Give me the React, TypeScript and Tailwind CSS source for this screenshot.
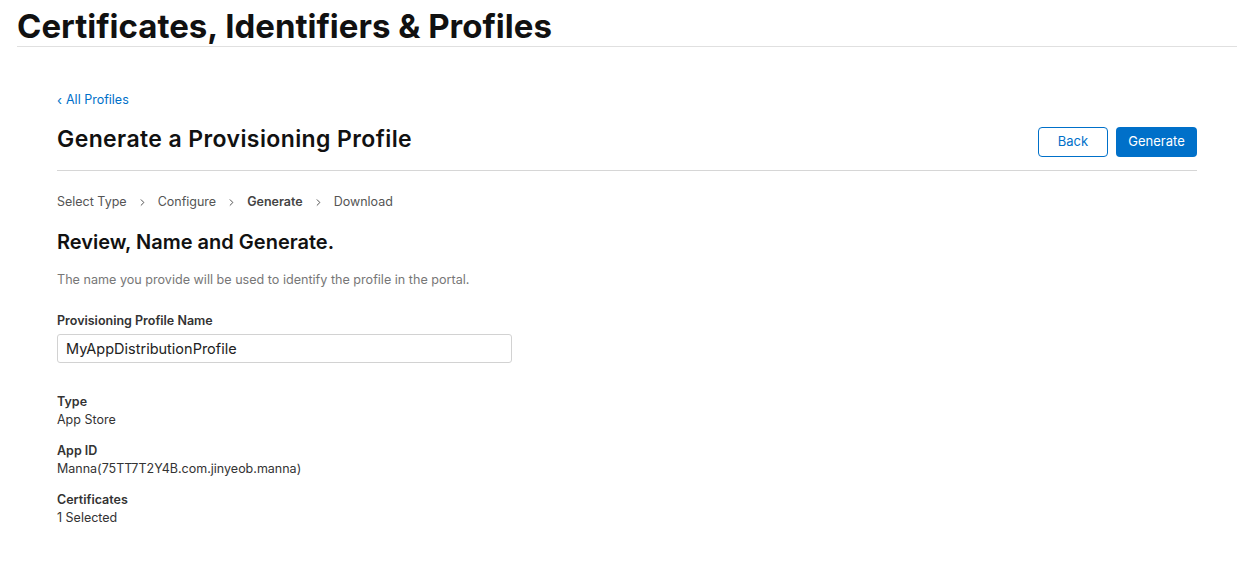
import { ChevronRight } from 'lucide-react';

const steps = ['Select Type', 'Configure', 'Generate', 'Download'];

const details = [
  { label: 'Type', value: 'App Store' },
  { label: 'App ID', value: 'Manna(75TT7T2Y4B.com.jinyeob.manna)' },
  { label: 'Certificates', value: '1 Selected' },
];

export default function App() {
  return (
    <div className="w-[1244px] h-[576px] bg-white text-[#1d1d1f] font-['Inter','Liberation_Sans',sans-serif] overflow-hidden">
      <header className="ml-[17px] mr-[7px] pt-[7px] border-b border-[#e0e0e0]">
        <h1 className="text-[33px] leading-[39px] font-bold text-[#111]">
          Certificates, Identifiers &amp; Profiles
        </h1>
      </header>

      <main className="ml-[57px] mr-[47px] mt-[45px]">
        <a className="flex items-center text-[12.5px] leading-[16px] text-[#0070c9]">
          <span className="mr-[4px] text-[13px] leading-[16px]">‹</span>
          All Profiles
        </a>

        <div className="flex items-center justify-between mt-[13px] pb-[13px] border-b border-[#d6d6d6]">
          <h2 className="text-[23px] leading-[28px] font-semibold text-[#111] tracking-[0.4px]">
            Generate a Provisioning Profile
          </h2>
          <div className="flex gap-[8px] mt-[6px]">
            <button className="w-[70px] h-[30px] rounded-[4px] border border-[#0070c9] text-[#0070c9] text-[13px]">
              Back
            </button>
            <button className="w-[81px] h-[30px] rounded-[4px] bg-[#0070c9] text-white text-[13px]">
              Generate
            </button>
          </div>
        </div>

        <nav className="flex items-center mt-[23px] text-[12.5px] leading-[16px] text-[#555]">
          {steps.map((s, i) => (
            <div key={s} className="flex items-center">
              <span className={s === 'Generate' ? 'font-semibold text-[#444]' : ''}>{s}</span>
              {i < steps.length - 1 && (
                <ChevronRight className="w-[11px] h-[11px] mx-[10px] text-[#444]" strokeWidth={2} />
              )}
            </div>
          ))}
        </nav>

        <h3 className="mt-[19px] text-[20px] leading-[26px] font-semibold text-[#111]">
          Review, Name and Generate.
        </h3>
        <p className="mt-[17px] text-[12.6px] leading-[16px] text-[#777]">
          The name you provide will be used to identify the profile in the portal.
        </p>

        <label className="block mt-[25px] text-[12.5px] leading-[16px] font-semibold text-[#333]">
          Provisioning Profile Name
        </label>
        <input
          readOnly
          value="MyAppDistributionProfile"
          className="mt-[5px] w-[455px] h-[29px] px-[8px] rounded-[3px] border border-[#d2d2d2] text-[14.5px] text-[#222] outline-none"
        />

        <div className="mt-[30px] flex flex-col gap-[13px]">
          {details.map(d => (
            <div key={d.label} className="text-[12.5px] leading-[18px]">
              <div className="font-semibold text-[#333]">{d.label}</div>
              <div className="text-[#333]">{d.value}</div>
            </div>
          ))}
        </div>
      </main>
    </div>
  );
}
